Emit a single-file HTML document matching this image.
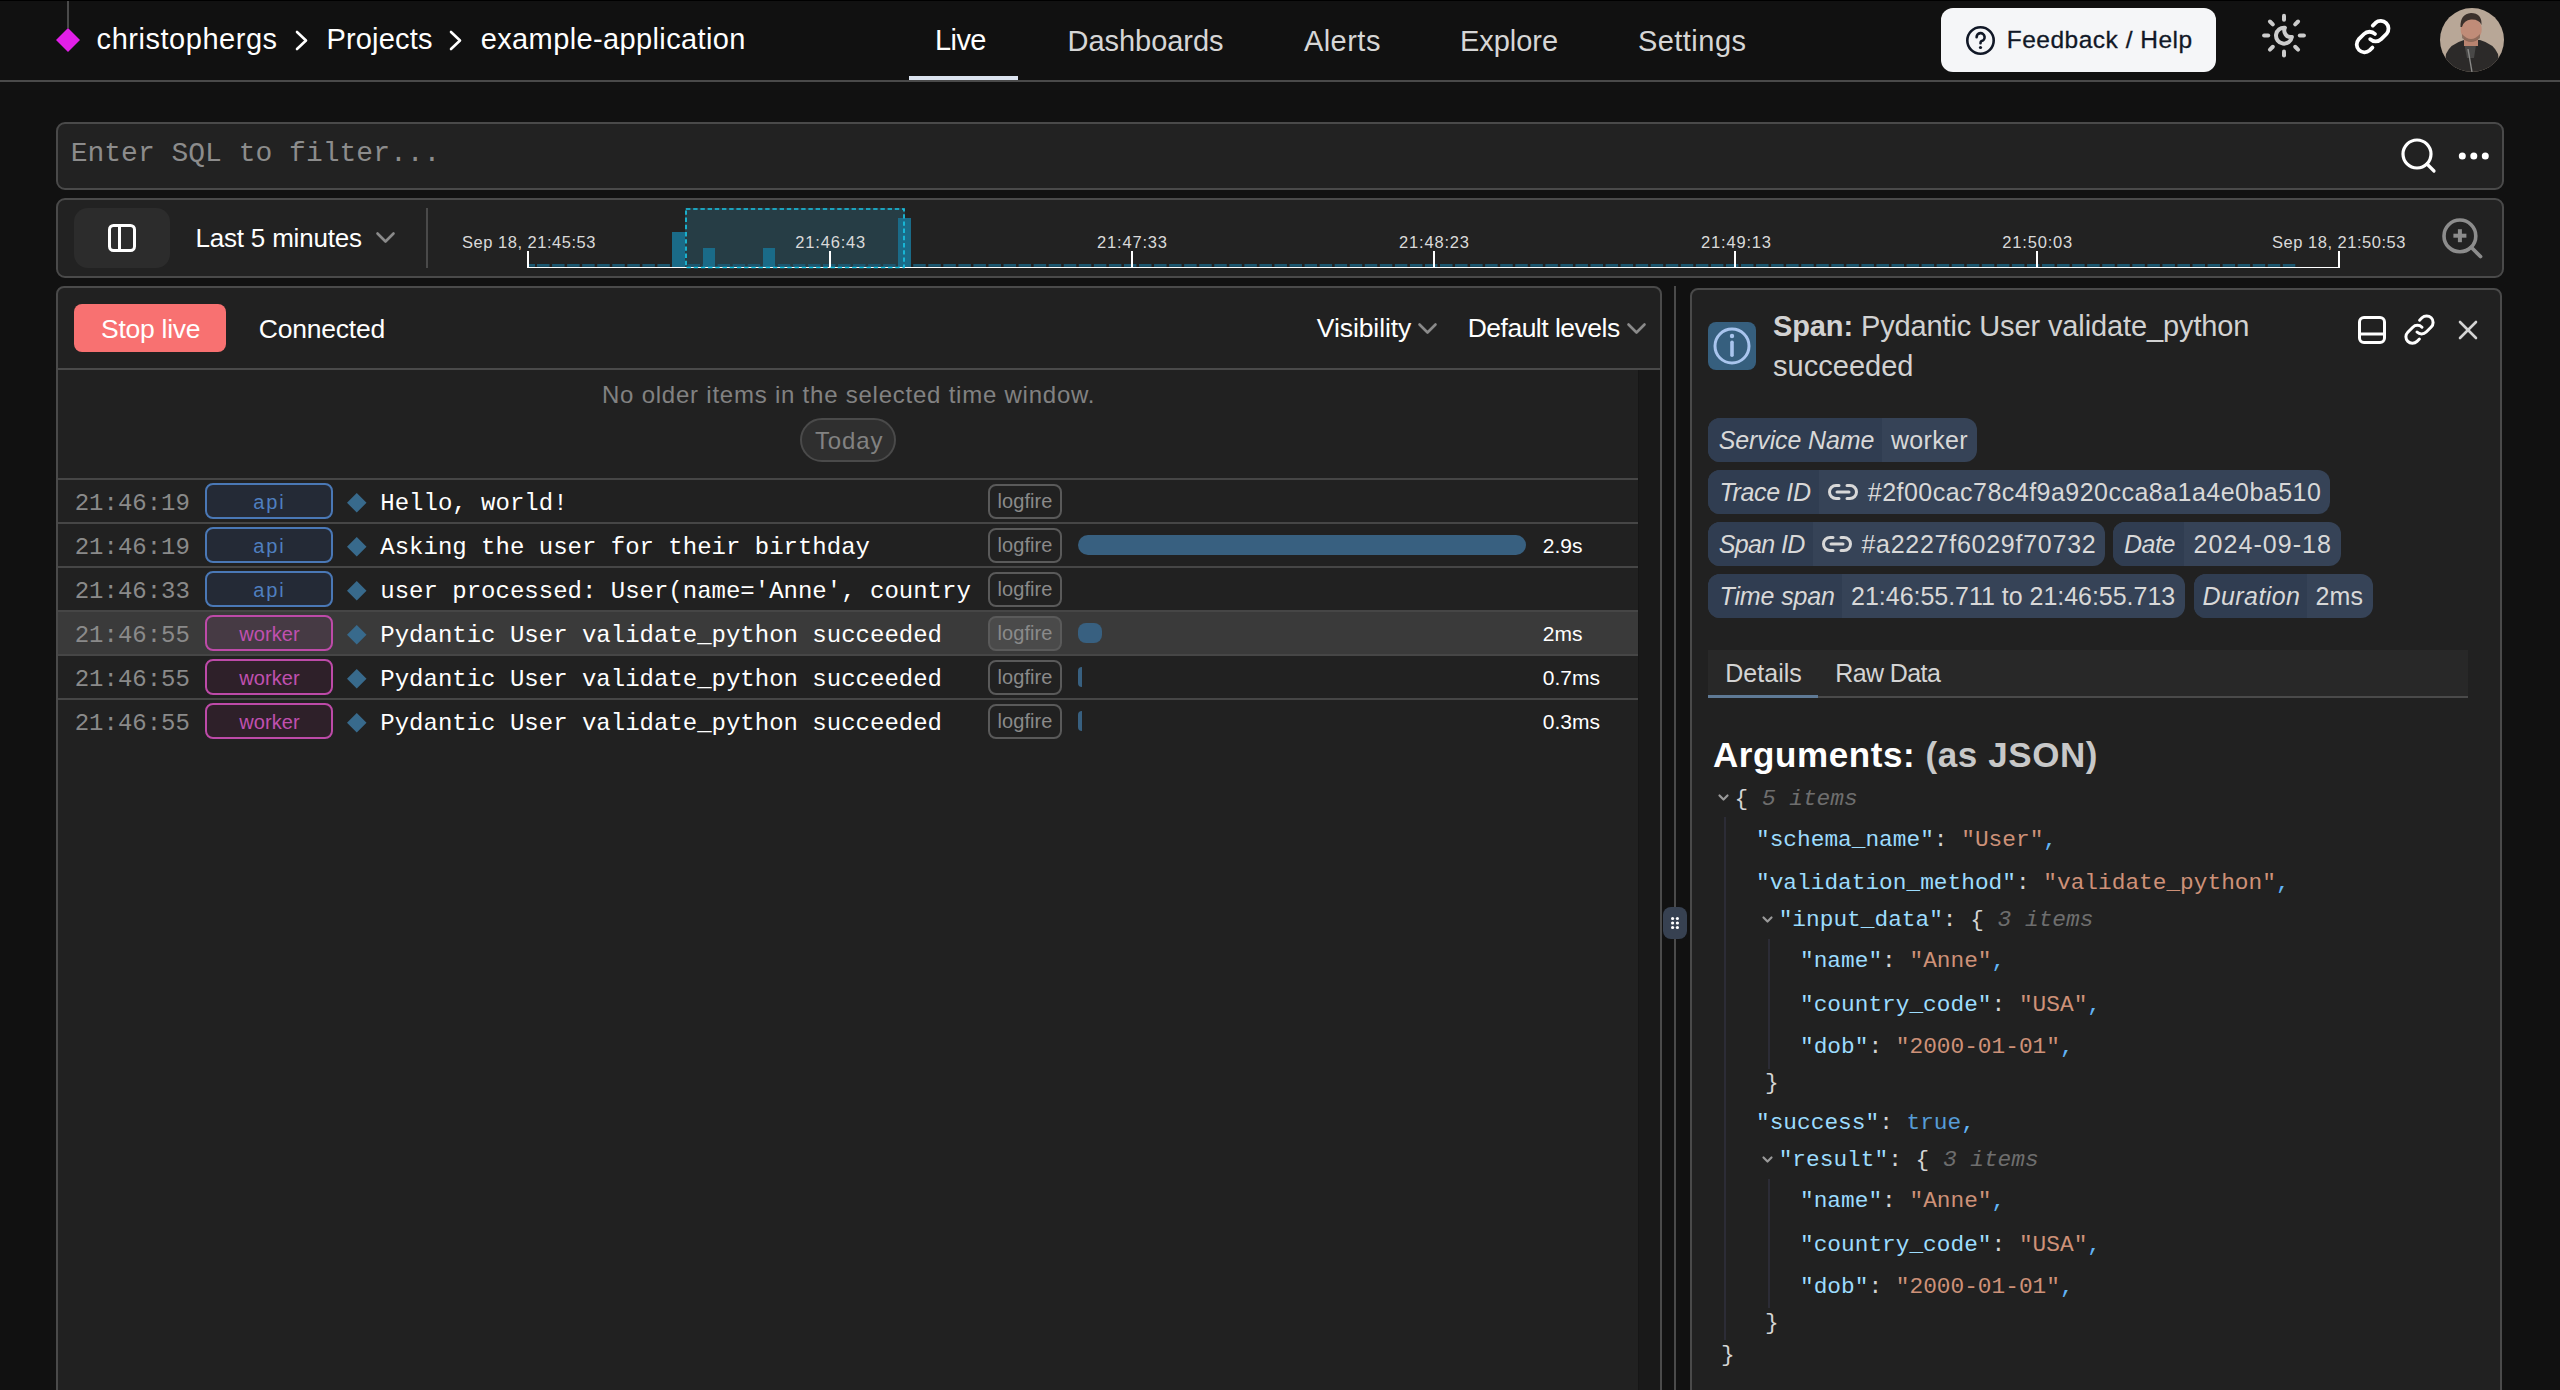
<!DOCTYPE html><html><head><meta charset="utf-8"><style>html,body{margin:0;padding:0;background:#111111;width:2560px;height:1390px;overflow:hidden;position:relative}</style></head><body><div style="position:absolute;left:0px;top:0px;width:2560px;height:1px;background:#000;border-radius:0px;"></div><div style="position:absolute;left:0px;top:80px;width:2560px;height:2px;background:#4a4a4a;border-radius:0px;"></div><div style="position:absolute;left:67px;top:1px;width:2px;height:27px;background:#4a4a4a;border-radius:0px;"></div><svg style="position:absolute;left:56px;top:28px;overflow:visible" width="24" height="24" viewBox="0 0 24 24"><polygon points="12,0 24,12 12,24 0,12" fill="#e21fe8"/></svg><svg style="position:absolute;left:296px;top:30.5px;overflow:visible" width="12" height="19" viewBox="0 0 12 19"><polyline points="1,1 10,9.5 1,18" fill="none" stroke="#fff" stroke-width="2.6" stroke-linecap="round" stroke-linejoin="round"/></svg><svg style="position:absolute;left:450px;top:30.5px;overflow:visible" width="12" height="19" viewBox="0 0 12 19"><polyline points="1,1 10,9.5 1,18" fill="none" stroke="#fff" stroke-width="2.6" stroke-linecap="round" stroke-linejoin="round"/></svg><div style="position:absolute;left:909px;top:76px;width:109px;height:4px;background:#dbe3ef;border-radius:0px;"></div><div style="position:absolute;left:1941px;top:8px;width:275px;height:64px;background:#f5f6f8;border-radius:12px;"></div><svg style="position:absolute;left:1966px;top:25.5px;overflow:visible" width="29" height="29" viewBox="0 0 29 29"><circle cx="14.5" cy="14.5" r="13.2" fill="none" stroke="#111827" stroke-width="2.6"/><path d="M10.6 11.2 A4 4 0 1 1 15.6 15 C14.7 15.4 14.5 16 14.5 17.2" fill="none" stroke="#111827" stroke-width="2.6" stroke-linecap="round"/><circle cx="14.5" cy="21.5" r="1.6" fill="#111827"/></svg><svg style="position:absolute;left:2262px;top:14px;overflow:visible" width="44" height="44" viewBox="0 0 44 44"><line x1="37.80" y1="21.60" x2="41.90" y2="21.60" stroke="#cccccc" stroke-width="4" stroke-linecap="round"/><line x1="33.17" y1="32.77" x2="36.07" y2="35.67" stroke="#cccccc" stroke-width="4" stroke-linecap="round"/><line x1="22.00" y1="37.40" x2="22.00" y2="41.50" stroke="#cccccc" stroke-width="4" stroke-linecap="round"/><line x1="10.83" y1="32.77" x2="7.93" y2="35.67" stroke="#cccccc" stroke-width="4" stroke-linecap="round"/><line x1="6.20" y1="21.60" x2="2.10" y2="21.60" stroke="#cccccc" stroke-width="4" stroke-linecap="round"/><line x1="10.83" y1="10.43" x2="7.93" y2="7.53" stroke="#cccccc" stroke-width="4" stroke-linecap="round"/><line x1="22.00" y1="5.80" x2="22.00" y2="1.70" stroke="#cccccc" stroke-width="4" stroke-linecap="round"/><line x1="33.17" y1="10.43" x2="36.07" y2="7.53" stroke="#cccccc" stroke-width="4" stroke-linecap="round"/><path d="M22.9 13.7 A8 8 0 1 0 29.9 23 A6.6 6.6 0 0 1 22.9 13.7 Z" fill="none" stroke="#cccccc" stroke-width="4" stroke-linejoin="round"/></svg><svg style="position:absolute;left:2354px;top:18px;overflow:visible" width="37" height="37" viewBox="0 0 37 37"><g fill="none" stroke="#fff" stroke-width="3.8" stroke-linecap="round"><path d="M16.2 21.2 A7.8 7.8 0 0 0 27.2 21.2 L32.6 15.8 A7.8 7.8 0 0 0 21.6 4.8 L18.8 7.6"/><path d="M21 16 A7.8 7.8 0 0 0 10 16 L4.6 21.4 A7.8 7.8 0 0 0 15.6 32.4 L18.4 29.6"/></g></svg><svg style="position:absolute;left:2440px;top:8px;overflow:visible" width="64" height="64" viewBox="0 0 64 64"><defs><clipPath id="avc"><circle cx="32" cy="32" r="32"/></clipPath></defs><g clip-path="url(#avc)"><rect width="64" height="64" fill="#b8a797"/><path d="M4 64 L6 46 Q10 36 24 32 L40 32 Q54 36 58 46 L60 64 Z" fill="#2c2a29"/><path d="M24.5 37 L36 37 L34 50 L27 50 Z" fill="#494847"/><rect x="24" y="28" width="14" height="10" fill="#b98470"/><ellipse cx="31.2" cy="21.5" rx="10.5" ry="11.5" fill="#c08c78"/><path d="M20.5 19 Q20 6 31 5 Q42 5 41.5 17 Q39 11 31 11.5 Q24 12 22 19 Z" fill="#3b302b"/><path d="M22 26 Q31 36 40 26 L40 30 Q31 38 22 30 Z" fill="#6e5548" opacity="0.6"/><line x1="28" y1="41" x2="32" y2="64" stroke="#8a8a88" stroke-width="1.4"/></g></svg><div style="position:absolute;left:56px;top:122px;width:2448px;height:68px;background:#222222;border-radius:9px;border:2px solid #4a4a4a;box-sizing:border-box;"></div><svg style="position:absolute;left:2400px;top:138px;overflow:visible" width="38" height="38" viewBox="0 0 38 38"><circle cx="17" cy="16" r="14" fill="none" stroke="#fff" stroke-width="3.2"/><line x1="27" y1="26" x2="34" y2="33" stroke="#fff" stroke-width="3.2" stroke-linecap="round"/></svg><svg style="position:absolute;left:2456px;top:150px;overflow:visible" width="36" height="12" viewBox="0 0 36 12"><circle cx="6.3" cy="6" r="3.5" fill="#fff"/><circle cx="17.8" cy="6" r="3.5" fill="#fff"/><circle cx="29.3" cy="6" r="3.5" fill="#fff"/></svg><div style="position:absolute;left:56px;top:198px;width:2448px;height:80px;background:#222222;border-radius:9px;border:2px solid #4a4a4a;box-sizing:border-box;"></div><div style="position:absolute;left:74px;top:208px;width:96px;height:60px;background:#2c2c2c;border-radius:14px;"></div><svg style="position:absolute;left:108px;top:224px;overflow:visible" width="28" height="28" viewBox="0 0 28 28"><rect x="1.5" y="1.5" width="25" height="25" rx="4" fill="none" stroke="#fff" stroke-width="3"/><line x1="11.5" y1="1.5" x2="11.5" y2="26.5" stroke="#fff" stroke-width="3"/></svg><svg style="position:absolute;left:376px;top:232px;overflow:visible" width="19" height="12" viewBox="0 0 19 12"><polyline points="1.5,1.5 9.5,9.5 17.5,1.5" fill="none" stroke="#8a8a8a" stroke-width="2.6" stroke-linecap="round" stroke-linejoin="round"/></svg><div style="position:absolute;left:426px;top:208px;width:2px;height:60px;background:#4a4a4a;border-radius:0px;"></div><div style="position:absolute;left:685px;top:208px;width:220px;height:60px;background:rgba(46,100,120,0.42);border-radius:0px;"></div><svg style="position:absolute;left:527px;top:264px;overflow:visible" width="1780" height="3" viewBox="0 0 1780 3"><rect x="2" y="0" width="6" height="2.8" fill="#1b5770"/><rect x="10.00" y="0" width="12.5" height="2.8" fill="#1b5770"/><rect x="25.05" y="0" width="12.5" height="2.8" fill="#1b5770"/><rect x="40.10" y="0" width="12.5" height="2.8" fill="#1b5770"/><rect x="55.15" y="0" width="12.5" height="2.8" fill="#1b5770"/><rect x="70.20" y="0" width="12.5" height="2.8" fill="#1b5770"/><rect x="85.25" y="0" width="12.5" height="2.8" fill="#1b5770"/><rect x="100.30" y="0" width="12.5" height="2.8" fill="#1b5770"/><rect x="115.35" y="0" width="12.5" height="2.8" fill="#1b5770"/><rect x="130.40" y="0" width="12.5" height="2.8" fill="#1b5770"/><rect x="145.45" y="0" width="12.5" height="2.8" fill="#1b5770"/><rect x="160.50" y="0" width="12.5" height="2.8" fill="#1b5770"/><rect x="175.55" y="0" width="12.5" height="2.8" fill="#1b5770"/><rect x="190.60" y="0" width="12.5" height="2.8" fill="#1b5770"/><rect x="205.65" y="0" width="12.5" height="2.8" fill="#1b5770"/><rect x="220.70" y="0" width="12.5" height="2.8" fill="#1b5770"/><rect x="235.75" y="0" width="12.5" height="2.8" fill="#1b5770"/><rect x="250.80" y="0" width="12.5" height="2.8" fill="#1b5770"/><rect x="265.85" y="0" width="12.5" height="2.8" fill="#1b5770"/><rect x="280.90" y="0" width="12.5" height="2.8" fill="#1b5770"/><rect x="295.95" y="0" width="12.5" height="2.8" fill="#1b5770"/><rect x="311.00" y="0" width="12.5" height="2.8" fill="#1b5770"/><rect x="326.05" y="0" width="12.5" height="2.8" fill="#1b5770"/><rect x="341.10" y="0" width="12.5" height="2.8" fill="#1b5770"/><rect x="356.15" y="0" width="12.5" height="2.8" fill="#1b5770"/><rect x="371.20" y="0" width="12.5" height="2.8" fill="#1b5770"/><rect x="386.25" y="0" width="12.5" height="2.8" fill="#1b5770"/><rect x="401.30" y="0" width="12.5" height="2.8" fill="#1b5770"/><rect x="416.35" y="0" width="12.5" height="2.8" fill="#1b5770"/><rect x="431.40" y="0" width="12.5" height="2.8" fill="#1b5770"/><rect x="446.45" y="0" width="12.5" height="2.8" fill="#1b5770"/><rect x="461.50" y="0" width="12.5" height="2.8" fill="#1b5770"/><rect x="476.55" y="0" width="12.5" height="2.8" fill="#1b5770"/><rect x="491.60" y="0" width="12.5" height="2.8" fill="#1b5770"/><rect x="506.65" y="0" width="12.5" height="2.8" fill="#1b5770"/><rect x="521.70" y="0" width="12.5" height="2.8" fill="#1b5770"/><rect x="536.75" y="0" width="12.5" height="2.8" fill="#1b5770"/><rect x="551.80" y="0" width="12.5" height="2.8" fill="#1b5770"/><rect x="566.85" y="0" width="12.5" height="2.8" fill="#1b5770"/><rect x="581.90" y="0" width="12.5" height="2.8" fill="#1b5770"/><rect x="596.95" y="0" width="12.5" height="2.8" fill="#1b5770"/><rect x="612.00" y="0" width="12.5" height="2.8" fill="#1b5770"/><rect x="627.05" y="0" width="12.5" height="2.8" fill="#1b5770"/><rect x="642.10" y="0" width="12.5" height="2.8" fill="#1b5770"/><rect x="657.15" y="0" width="12.5" height="2.8" fill="#1b5770"/><rect x="672.20" y="0" width="12.5" height="2.8" fill="#1b5770"/><rect x="687.25" y="0" width="12.5" height="2.8" fill="#1b5770"/><rect x="702.30" y="0" width="12.5" height="2.8" fill="#1b5770"/><rect x="717.35" y="0" width="12.5" height="2.8" fill="#1b5770"/><rect x="732.40" y="0" width="12.5" height="2.8" fill="#1b5770"/><rect x="747.45" y="0" width="12.5" height="2.8" fill="#1b5770"/><rect x="762.50" y="0" width="12.5" height="2.8" fill="#1b5770"/><rect x="777.55" y="0" width="12.5" height="2.8" fill="#1b5770"/><rect x="792.60" y="0" width="12.5" height="2.8" fill="#1b5770"/><rect x="807.65" y="0" width="12.5" height="2.8" fill="#1b5770"/><rect x="822.70" y="0" width="12.5" height="2.8" fill="#1b5770"/><rect x="837.75" y="0" width="12.5" height="2.8" fill="#1b5770"/><rect x="852.80" y="0" width="12.5" height="2.8" fill="#1b5770"/><rect x="867.85" y="0" width="12.5" height="2.8" fill="#1b5770"/><rect x="882.90" y="0" width="12.5" height="2.8" fill="#1b5770"/><rect x="897.95" y="0" width="12.5" height="2.8" fill="#1b5770"/><rect x="913.00" y="0" width="12.5" height="2.8" fill="#1b5770"/><rect x="928.05" y="0" width="12.5" height="2.8" fill="#1b5770"/><rect x="943.10" y="0" width="12.5" height="2.8" fill="#1b5770"/><rect x="958.15" y="0" width="12.5" height="2.8" fill="#1b5770"/><rect x="973.20" y="0" width="12.5" height="2.8" fill="#1b5770"/><rect x="988.25" y="0" width="12.5" height="2.8" fill="#1b5770"/><rect x="1003.30" y="0" width="12.5" height="2.8" fill="#1b5770"/><rect x="1018.35" y="0" width="12.5" height="2.8" fill="#1b5770"/><rect x="1033.40" y="0" width="12.5" height="2.8" fill="#1b5770"/><rect x="1048.45" y="0" width="12.5" height="2.8" fill="#1b5770"/><rect x="1063.50" y="0" width="12.5" height="2.8" fill="#1b5770"/><rect x="1078.55" y="0" width="12.5" height="2.8" fill="#1b5770"/><rect x="1093.60" y="0" width="12.5" height="2.8" fill="#1b5770"/><rect x="1108.65" y="0" width="12.5" height="2.8" fill="#1b5770"/><rect x="1123.70" y="0" width="12.5" height="2.8" fill="#1b5770"/><rect x="1138.75" y="0" width="12.5" height="2.8" fill="#1b5770"/><rect x="1153.80" y="0" width="12.5" height="2.8" fill="#1b5770"/><rect x="1168.85" y="0" width="12.5" height="2.8" fill="#1b5770"/><rect x="1183.90" y="0" width="12.5" height="2.8" fill="#1b5770"/><rect x="1198.95" y="0" width="12.5" height="2.8" fill="#1b5770"/><rect x="1214.00" y="0" width="12.5" height="2.8" fill="#1b5770"/><rect x="1229.05" y="0" width="12.5" height="2.8" fill="#1b5770"/><rect x="1244.10" y="0" width="12.5" height="2.8" fill="#1b5770"/><rect x="1259.15" y="0" width="12.5" height="2.8" fill="#1b5770"/><rect x="1274.20" y="0" width="12.5" height="2.8" fill="#1b5770"/><rect x="1289.25" y="0" width="12.5" height="2.8" fill="#1b5770"/><rect x="1304.30" y="0" width="12.5" height="2.8" fill="#1b5770"/><rect x="1319.35" y="0" width="12.5" height="2.8" fill="#1b5770"/><rect x="1334.40" y="0" width="12.5" height="2.8" fill="#1b5770"/><rect x="1349.45" y="0" width="12.5" height="2.8" fill="#1b5770"/><rect x="1364.50" y="0" width="12.5" height="2.8" fill="#1b5770"/><rect x="1379.55" y="0" width="12.5" height="2.8" fill="#1b5770"/><rect x="1394.60" y="0" width="12.5" height="2.8" fill="#1b5770"/><rect x="1409.65" y="0" width="12.5" height="2.8" fill="#1b5770"/><rect x="1424.70" y="0" width="12.5" height="2.8" fill="#1b5770"/><rect x="1439.75" y="0" width="12.5" height="2.8" fill="#1b5770"/><rect x="1454.80" y="0" width="12.5" height="2.8" fill="#1b5770"/><rect x="1469.85" y="0" width="12.5" height="2.8" fill="#1b5770"/><rect x="1484.90" y="0" width="12.5" height="2.8" fill="#1b5770"/><rect x="1499.95" y="0" width="12.5" height="2.8" fill="#1b5770"/><rect x="1515.00" y="0" width="12.5" height="2.8" fill="#1b5770"/><rect x="1530.05" y="0" width="12.5" height="2.8" fill="#1b5770"/><rect x="1545.10" y="0" width="12.5" height="2.8" fill="#1b5770"/><rect x="1560.15" y="0" width="12.5" height="2.8" fill="#1b5770"/><rect x="1575.20" y="0" width="12.5" height="2.8" fill="#1b5770"/><rect x="1590.25" y="0" width="12.5" height="2.8" fill="#1b5770"/><rect x="1605.30" y="0" width="12.5" height="2.8" fill="#1b5770"/><rect x="1620.35" y="0" width="12.5" height="2.8" fill="#1b5770"/><rect x="1635.40" y="0" width="12.5" height="2.8" fill="#1b5770"/><rect x="1650.45" y="0" width="12.5" height="2.8" fill="#1b5770"/><rect x="1665.50" y="0" width="12.5" height="2.8" fill="#1b5770"/><rect x="1680.55" y="0" width="12.5" height="2.8" fill="#1b5770"/><rect x="1695.60" y="0" width="12.5" height="2.8" fill="#1b5770"/><rect x="1710.65" y="0" width="12.5" height="2.8" fill="#1b5770"/><rect x="1725.70" y="0" width="12.5" height="2.8" fill="#1b5770"/><rect x="1740.75" y="0" width="12.5" height="2.8" fill="#1b5770"/><rect x="1755.80" y="0" width="12.5" height="2.8" fill="#1b5770"/></svg><div style="position:absolute;left:672.45px;top:232px;width:12.5px;height:35px;background:#1a6b88;border-radius:0px;"></div><div style="position:absolute;left:702.55px;top:248px;width:12.5px;height:19px;background:#1a6b88;border-radius:0px;"></div><div style="position:absolute;left:762.75px;top:248px;width:12.5px;height:19px;background:#1a6b88;border-radius:0px;"></div><div style="position:absolute;left:898.2px;top:218px;width:12.5px;height:49px;background:#1a6b88;border-radius:0px;"></div><div style="position:absolute;left:527px;top:266.5px;width:1812.5px;height:1.5px;background:#ffffff;border-radius:0px;"></div><div style="position:absolute;left:526.5px;top:251px;width:2.0px;height:17px;background:#ffffff;border-radius:0px;"></div><div style="position:absolute;left:829px;top:251px;width:2px;height:17px;background:#ffffff;border-radius:0px;"></div><div style="position:absolute;left:1130.5px;top:251px;width:2.0px;height:17px;background:#ffffff;border-radius:0px;"></div><div style="position:absolute;left:1432.5px;top:251px;width:2.0px;height:17px;background:#ffffff;border-radius:0px;"></div><div style="position:absolute;left:1734px;top:251px;width:2px;height:17px;background:#ffffff;border-radius:0px;"></div><div style="position:absolute;left:2035.5px;top:251px;width:2.0px;height:17px;background:#ffffff;border-radius:0px;"></div><div style="position:absolute;left:2337.5px;top:251px;width:2.0px;height:17px;background:#ffffff;border-radius:0px;"></div><svg style="position:absolute;left:685px;top:208px;overflow:visible" width="220" height="60" viewBox="0 0 220 60"><rect x="1" y="1" width="218" height="58.5" fill="none" stroke="#19c3e3" stroke-width="1.7" stroke-dasharray="4.4 2.8"/></svg><svg style="position:absolute;left:2441px;top:216px;overflow:visible" width="44" height="44" viewBox="0 0 44 44"><circle cx="18.9" cy="19.9" r="15.9" fill="none" stroke="#8c8c8c" stroke-width="3.6"/><line x1="30.5" y1="31.5" x2="39.5" y2="40.5" stroke="#8c8c8c" stroke-width="3.8" stroke-linecap="round"/><line x1="18.9" y1="13.2" x2="18.9" y2="26.2" stroke="#8c8c8c" stroke-width="4" stroke-linecap="butt"/><line x1="12.4" y1="19.7" x2="25.4" y2="19.7" stroke="#8c8c8c" stroke-width="4" stroke-linecap="butt"/></svg><div style="position:absolute;left:56px;top:286px;width:1606px;height:1134px;background:#212121;border-radius:8px;border:2px solid #4a4a4a;box-sizing:border-box;"></div><div style="position:absolute;left:58px;top:368px;width:1602px;height:2px;background:#4a4a4a;border-radius:0px;"></div><div style="position:absolute;left:74px;top:304px;width:152px;height:48px;background:#f87171;border-radius:8px;"></div><svg style="position:absolute;left:1418px;top:323px;overflow:visible" width="19" height="12" viewBox="0 0 19 12"><polyline points="1.5,1.5 9.5,9.5 17.5,1.5" fill="none" stroke="#8a8a8a" stroke-width="2.6" stroke-linecap="round" stroke-linejoin="round"/></svg><svg style="position:absolute;left:1626.5px;top:323px;overflow:visible" width="19" height="12" viewBox="0 0 19 12"><polyline points="1.5,1.5 9.5,9.5 17.5,1.5" fill="none" stroke="#8a8a8a" stroke-width="2.6" stroke-linecap="round" stroke-linejoin="round"/></svg><div style="position:absolute;left:1638px;top:370px;width:22px;height:1020px;background:#191919;border-radius:0px;"></div><div style="position:absolute;left:1638px;top:370px;width:1px;height:1020px;background:#161616;border-radius:0px;"></div><div style="position:absolute;left:800px;top:418px;width:96px;height:44px;background:#2f2f2f;border-radius:22px;border:2px solid #4a4a4a;box-sizing:border-box;"></div><div style="position:absolute;left:58px;top:478px;width:1580px;height:2px;background:#464646;border-radius:0px;"></div><div style="position:absolute;left:205px;top:483px;width:128px;height:36px;background:#242a36;border-radius:8px;border:2px solid #4a78b6;box-sizing:border-box;"></div><svg style="position:absolute;left:346.5px;top:492.5px;overflow:visible" width="19.5" height="19.5" viewBox="0 0 19.5 19.5"><polygon points="9.75,0 19.5,9.75 9.75,19.5 0,9.75" fill="#386a8c"/></svg><div style="position:absolute;left:988px;top:484px;width:74px;height:35px;background:transparent;border-radius:8px;border:2px solid #5a5a5a;box-sizing:border-box;"></div><div style="position:absolute;left:58px;top:522px;width:1580px;height:2px;background:#464646;border-radius:0px;"></div><div style="position:absolute;left:205px;top:527px;width:128px;height:36px;background:#242a36;border-radius:8px;border:2px solid #4a78b6;box-sizing:border-box;"></div><svg style="position:absolute;left:346.5px;top:536.5px;overflow:visible" width="19.5" height="19.5" viewBox="0 0 19.5 19.5"><polygon points="9.75,0 19.5,9.75 9.75,19.5 0,9.75" fill="#386a8c"/></svg><div style="position:absolute;left:988px;top:528px;width:74px;height:35px;background:transparent;border-radius:8px;border:2px solid #5a5a5a;box-sizing:border-box;"></div><div style="position:absolute;left:1078px;top:535px;width:448px;height:20px;background:#386080;border-radius:10px;"></div><div style="position:absolute;left:58px;top:566px;width:1580px;height:2px;background:#464646;border-radius:0px;"></div><div style="position:absolute;left:205px;top:571px;width:128px;height:36px;background:#242a36;border-radius:8px;border:2px solid #4a78b6;box-sizing:border-box;"></div><svg style="position:absolute;left:346.5px;top:580.5px;overflow:visible" width="19.5" height="19.5" viewBox="0 0 19.5 19.5"><polygon points="9.75,0 19.5,9.75 9.75,19.5 0,9.75" fill="#386a8c"/></svg><div style="position:absolute;left:988px;top:572px;width:74px;height:35px;background:transparent;border-radius:8px;border:2px solid #5a5a5a;box-sizing:border-box;"></div><div style="position:absolute;left:58px;top:610px;width:1580px;height:2px;background:#464646;border-radius:0px;"></div><div style="position:absolute;left:58px;top:612px;width:1580px;height:42px;background:#3a3a3a;border-radius:0px;"></div><div style="position:absolute;left:205px;top:615px;width:128px;height:36px;background:#463a44;border-radius:8px;border:2px solid #bd4aa8;box-sizing:border-box;"></div><svg style="position:absolute;left:346.5px;top:624.5px;overflow:visible" width="19.5" height="19.5" viewBox="0 0 19.5 19.5"><polygon points="9.75,0 19.5,9.75 9.75,19.5 0,9.75" fill="#386a8c"/></svg><div style="position:absolute;left:988px;top:616px;width:74px;height:35px;background:#4a4a4a;border-radius:8px;border:2px solid #5a5a5a;box-sizing:border-box;"></div><div style="position:absolute;left:1078px;top:623px;width:24px;height:20px;background:#386080;border-radius:8px;"></div><div style="position:absolute;left:58px;top:654px;width:1580px;height:2px;background:#464646;border-radius:0px;"></div><div style="position:absolute;left:205px;top:659px;width:128px;height:36px;background:#2e2029;border-radius:8px;border:2px solid #bd4aa8;box-sizing:border-box;"></div><svg style="position:absolute;left:346.5px;top:668.5px;overflow:visible" width="19.5" height="19.5" viewBox="0 0 19.5 19.5"><polygon points="9.75,0 19.5,9.75 9.75,19.5 0,9.75" fill="#386a8c"/></svg><div style="position:absolute;left:988px;top:660px;width:74px;height:35px;background:transparent;border-radius:8px;border:2px solid #5a5a5a;box-sizing:border-box;"></div><div style="position:absolute;left:1078px;top:667px;width:4px;height:20px;background:#386080;border-radius:0px;border-radius:10px 0 0 10px;"></div><div style="position:absolute;left:58px;top:698px;width:1580px;height:2px;background:#464646;border-radius:0px;"></div><div style="position:absolute;left:205px;top:703px;width:128px;height:36px;background:#2e2029;border-radius:8px;border:2px solid #bd4aa8;box-sizing:border-box;"></div><svg style="position:absolute;left:346.5px;top:712.5px;overflow:visible" width="19.5" height="19.5" viewBox="0 0 19.5 19.5"><polygon points="9.75,0 19.5,9.75 9.75,19.5 0,9.75" fill="#386a8c"/></svg><div style="position:absolute;left:988px;top:704px;width:74px;height:35px;background:transparent;border-radius:8px;border:2px solid #5a5a5a;box-sizing:border-box;"></div><div style="position:absolute;left:1078px;top:711px;width:4px;height:20px;background:#386080;border-radius:0px;border-radius:10px 0 0 10px;"></div><div style="position:absolute;left:58px;top:700px;width:1580px;height:0px;background:#464646;border-radius:0px;"></div><div style="position:absolute;left:1674px;top:286px;width:2px;height:1104px;background:#4a4a4a;border-radius:0px;"></div><div style="position:absolute;left:1663px;top:907px;width:24px;height:32px;background:#374151;border-radius:8px;"></div><svg style="position:absolute;left:1663px;top:907px;overflow:visible" width="24" height="32" viewBox="0 0 24 32"><circle cx="9.6" cy="11.5" r="1.6" fill="#fff"/><circle cx="9.6" cy="16" r="1.6" fill="#fff"/><circle cx="9.6" cy="20.5" r="1.6" fill="#fff"/><circle cx="14.4" cy="11.5" r="1.6" fill="#fff"/><circle cx="14.4" cy="16" r="1.6" fill="#fff"/><circle cx="14.4" cy="20.5" r="1.6" fill="#fff"/></svg><div style="position:absolute;left:1690px;top:288px;width:812px;height:1132px;background:#212121;border-radius:8px;border:2px solid #4a4a4a;box-sizing:border-box;"></div><div style="position:absolute;left:1708px;top:322px;width:48px;height:48px;background:#365f7e;border-radius:8px;"></div><svg style="position:absolute;left:1708px;top:322px;overflow:visible" width="48" height="48" viewBox="0 0 48 48"><circle cx="24" cy="24" r="17" fill="none" stroke="#a9c5ee" stroke-width="3"/><circle cx="24" cy="14" r="2.2" fill="#a9c5ee"/><line x1="24" y1="20.2" x2="24" y2="33.2" stroke="#a9c5ee" stroke-width="3.6" stroke-linecap="round"/></svg><svg style="position:absolute;left:2358px;top:316px;overflow:visible" width="28" height="28" viewBox="0 0 28 28"><rect x="1.5" y="1.5" width="25" height="25" rx="4.5" fill="none" stroke="#fff" stroke-width="3"/><line x1="1.5" y1="18" x2="26.5" y2="18" stroke="#fff" stroke-width="3"/></svg><svg style="position:absolute;left:2404px;top:314px;overflow:visible" width="32" height="32" viewBox="0 0 32 32"><g fill="none" stroke="#fff" stroke-width="3" stroke-linecap="round"><path d="M13 18 A6.5 6.5 0 0 0 22.2 18 L27.2 13 A6.5 6.5 0 0 0 18 3.8 L15.6 6.2"/><path d="M18 13.2 A6.5 6.5 0 0 0 8.8 13.2 L3.8 18.2 A6.5 6.5 0 0 0 13 27.4 L15.4 25"/></g></svg><svg style="position:absolute;left:2458px;top:320px;overflow:visible" width="20" height="20" viewBox="0 0 20 20"><line x1="2" y1="2" x2="18" y2="18" stroke="#d4d4d4" stroke-width="2.6" stroke-linecap="round"/><line x1="18" y1="2" x2="2" y2="18" stroke="#d4d4d4" stroke-width="2.6" stroke-linecap="round"/></svg><div style="position:absolute;left:1708px;top:418px;width:269px;height:44px;border-radius:12px;overflow:hidden;background:#364357"><div style="position:absolute;left:0;top:0;width:173.5999999999999px;height:44px;background:#303d51"></div></div><div style="position:absolute;left:1708px;top:470px;width:621.5999999999999px;height:44px;border-radius:12px;overflow:hidden;background:#364357"><div style="position:absolute;left:0;top:0;width:110.79999999999995px;height:44px;background:#303d51"></div></div><svg style="position:absolute;left:1828.4px;top:483px;overflow:visible" width="30" height="18" viewBox="0 0 30 18"><g fill="none" stroke="#d8d8d8" stroke-width="3" stroke-linecap="round"><path d="M11 2.5 H8 A6.5 6.5 0 0 0 8 15.5 H11"/><path d="M19 2.5 H22 A6.5 6.5 0 0 1 22 15.5 H19"/><line x1="9" y1="9" x2="21" y2="9"/></g></svg><div style="position:absolute;left:1708px;top:522px;width:396.8000000000002px;height:44px;border-radius:12px;overflow:hidden;background:#364357"><div style="position:absolute;left:0;top:0;width:104.70000000000005px;height:44px;background:#303d51"></div></div><svg style="position:absolute;left:1822.3px;top:535px;overflow:visible" width="30" height="18" viewBox="0 0 30 18"><g fill="none" stroke="#d8d8d8" stroke-width="3" stroke-linecap="round"><path d="M11 2.5 H8 A6.5 6.5 0 0 0 8 15.5 H11"/><path d="M19 2.5 H22 A6.5 6.5 0 0 1 22 15.5 H19"/><line x1="9" y1="9" x2="21" y2="9"/></g></svg><div style="position:absolute;left:2113.4px;top:522px;width:227.5px;height:44px;border-radius:12px;overflow:hidden;background:#364357"><div style="position:absolute;left:0;top:0;width:70.59999999999991px;height:44px;background:#303d51"></div></div><div style="position:absolute;left:1708px;top:574px;width:476.9000000000001px;height:44px;border-radius:12px;overflow:hidden;background:#364357"><div style="position:absolute;left:0;top:0;width:134.0999999999999px;height:44px;background:#303d51"></div></div><div style="position:absolute;left:2193.5px;top:574px;width:179.4000000000001px;height:44px;border-radius:12px;overflow:hidden;background:#364357"><div style="position:absolute;left:0;top:0;width:113.09999999999991px;height:44px;background:#303d51"></div></div><div style="position:absolute;left:1708px;top:650px;width:760px;height:46px;background:#282828;border-radius:0px;"></div><div style="position:absolute;left:1708px;top:695px;width:110px;height:3px;background:#5f7a96;border-radius:0px;"></div><div style="position:absolute;left:1818px;top:696px;width:650px;height:2px;background:#4a4a4a;border-radius:0px;"></div><svg style="position:absolute;left:1718px;top:794px;overflow:visible" width="11" height="8" viewBox="0 0 11 8"><polyline points="1.5,1.5 5.5,5.5 9.5,1.5" fill="none" stroke="#9a9a9a" stroke-width="2.2" stroke-linecap="round" stroke-linejoin="round"/></svg><svg style="position:absolute;left:1762px;top:916px;overflow:visible" width="11" height="8" viewBox="0 0 11 8"><polyline points="1.5,1.5 5.5,5.5 9.5,1.5" fill="none" stroke="#9a9a9a" stroke-width="2.2" stroke-linecap="round" stroke-linejoin="round"/></svg><svg style="position:absolute;left:1762px;top:1156px;overflow:visible" width="11" height="8" viewBox="0 0 11 8"><polyline points="1.5,1.5 5.5,5.5 9.5,1.5" fill="none" stroke="#9a9a9a" stroke-width="2.2" stroke-linecap="round" stroke-linejoin="round"/></svg><div style="position:absolute;left:1724px;top:817px;width:2px;height:523px;background:#2c2c36;border-radius:0px;"></div><div style="position:absolute;left:1768px;top:939px;width:2px;height:130px;background:#2c2c36;border-radius:0px;"></div><div style="position:absolute;left:1768px;top:1179px;width:2px;height:129px;background:#2c2c36;border-radius:0px;"></div><div id="t0" style="position:absolute;left:96.60px;top:25.35px;font-family:'Liberation Sans', sans-serif;font-size:29px;line-height:1;color:#fff;font-weight:400;font-style:normal;white-space:pre;letter-spacing:0.534px;">christophergs</div><div id="t1" style="position:absolute;left:326.40px;top:25.35px;font-family:'Liberation Sans', sans-serif;font-size:29px;line-height:1;color:#fff;font-weight:400;font-style:normal;white-space:pre;letter-spacing:0.191px;">Projects</div><div id="t2" style="position:absolute;left:480.70px;top:25.35px;font-family:'Liberation Sans', sans-serif;font-size:29px;line-height:1;color:#fff;font-weight:400;font-style:normal;white-space:pre;letter-spacing:0.381px;">example-application</div><div id="t3" style="position:absolute;left:935.00px;top:25.65px;font-family:'Liberation Sans', sans-serif;font-size:29px;line-height:1;color:#fff;font-weight:400;font-style:normal;white-space:pre;letter-spacing:-0.568px;">Live</div><div id="t4" style="position:absolute;left:1067.60px;top:27.35px;font-family:'Liberation Sans', sans-serif;font-size:29px;line-height:1;color:#d6d6d6;font-weight:400;font-style:normal;white-space:pre;letter-spacing:-0.053px;">Dashboards</div><div id="t5" style="position:absolute;left:1303.90px;top:27.35px;font-family:'Liberation Sans', sans-serif;font-size:29px;line-height:1;color:#d6d6d6;font-weight:400;font-style:normal;white-space:pre;letter-spacing:0.472px;">Alerts</div><div id="t6" style="position:absolute;left:1460.00px;top:27.35px;font-family:'Liberation Sans', sans-serif;font-size:29px;line-height:1;color:#d6d6d6;font-weight:400;font-style:normal;white-space:pre;letter-spacing:-0.038px;">Explore</div><div id="t7" style="position:absolute;left:1637.90px;top:27.35px;font-family:'Liberation Sans', sans-serif;font-size:29px;line-height:1;color:#d6d6d6;font-weight:400;font-style:normal;white-space:pre;letter-spacing:0.472px;">Settings</div><div id="t8" style="position:absolute;left:2006.70px;top:27.97px;font-family:'Liberation Sans', sans-serif;font-size:24.5px;line-height:1;color:#111827;font-weight:400;font-style:normal;white-space:pre;letter-spacing:0.507px;-webkit-text-stroke:0.3px #111827;">Feedback / Help</div><div id="t9" style="position:absolute;left:70.70px;top:140.42px;font-family:'Liberation Mono', monospace;font-size:28px;line-height:1;color:#8c8c8c;font-weight:400;font-style:normal;white-space:pre;letter-spacing:0.000px;">Enter SQL to filter...</div><div id="t10" style="position:absolute;left:195.50px;top:224.90px;font-family:'Liberation Sans', sans-serif;font-size:26px;line-height:1;color:#fff;font-weight:400;font-style:normal;white-space:pre;letter-spacing:-0.200px;">Last 5 minutes</div><div id="t11" style="position:absolute;left:462.00px;top:234.28px;font-family:'Liberation Sans', sans-serif;font-size:16.5px;line-height:1;color:#dadada;font-weight:400;font-style:normal;white-space:pre;letter-spacing:0.520px;">Sep 18, 21:45:53</div><div id="t12" style="position:absolute;left:795.30px;top:234.28px;font-family:'Liberation Sans', sans-serif;font-size:16.5px;line-height:1;color:#dadada;font-weight:400;font-style:normal;white-space:pre;letter-spacing:0.824px;">21:46:43</div><div id="t13" style="position:absolute;left:1097.00px;top:234.28px;font-family:'Liberation Sans', sans-serif;font-size:16.5px;line-height:1;color:#dadada;font-weight:400;font-style:normal;white-space:pre;letter-spacing:0.824px;">21:47:33</div><div id="t14" style="position:absolute;left:1399.00px;top:234.28px;font-family:'Liberation Sans', sans-serif;font-size:16.5px;line-height:1;color:#dadada;font-weight:400;font-style:normal;white-space:pre;letter-spacing:0.824px;">21:48:23</div><div id="t15" style="position:absolute;left:1701.00px;top:234.28px;font-family:'Liberation Sans', sans-serif;font-size:16.5px;line-height:1;color:#dadada;font-weight:400;font-style:normal;white-space:pre;letter-spacing:0.824px;">21:49:13</div><div id="t16" style="position:absolute;left:2002.30px;top:234.28px;font-family:'Liberation Sans', sans-serif;font-size:16.5px;line-height:1;color:#dadada;font-weight:400;font-style:normal;white-space:pre;letter-spacing:0.824px;">21:50:03</div><div id="t17" style="position:absolute;left:2272.00px;top:234.28px;font-family:'Liberation Sans', sans-serif;font-size:16.5px;line-height:1;color:#dadada;font-weight:400;font-style:normal;white-space:pre;letter-spacing:0.520px;">Sep 18, 21:50:53</div><div id="t18" style="position:absolute;left:101.00px;top:315.98px;font-family:'Liberation Sans', sans-serif;font-size:26.5px;line-height:1;color:#ffffff;font-weight:400;font-style:normal;white-space:pre;letter-spacing:-0.268px;">Stop live</div><div id="t19" style="position:absolute;left:258.80px;top:315.98px;font-family:'Liberation Sans', sans-serif;font-size:26.5px;line-height:1;color:#ffffff;font-weight:400;font-style:normal;white-space:pre;letter-spacing:-0.211px;">Connected</div><div id="t20" style="position:absolute;left:1316.80px;top:315.48px;font-family:'Liberation Sans', sans-serif;font-size:26.5px;line-height:1;color:#ffffff;font-weight:400;font-style:normal;white-space:pre;letter-spacing:-0.082px;">Visibility</div><div id="t21" style="position:absolute;left:1467.70px;top:315.48px;font-family:'Liberation Sans', sans-serif;font-size:26.5px;line-height:1;color:#ffffff;font-weight:400;font-style:normal;white-space:pre;letter-spacing:-0.506px;">Default levels</div><div id="t22" style="position:absolute;left:602.00px;top:382.60px;font-family:'Liberation Sans', sans-serif;font-size:24px;line-height:1;color:#828282;font-weight:400;font-style:normal;white-space:pre;letter-spacing:0.769px;">No older items in the selected time window.</div><div id="t23" style="position:absolute;left:815.00px;top:428.60px;font-family:'Liberation Sans', sans-serif;font-size:24px;line-height:1;color:#828282;font-weight:400;font-style:normal;white-space:pre;letter-spacing:0.863px;">Today</div><div id="t24" style="position:absolute;left:74.70px;top:492.06px;font-family:'Liberation Mono', monospace;font-size:24px;line-height:1;color:#8a8a8a;font-weight:400;font-style:normal;white-space:pre;letter-spacing:0.000px;">21:46:19</div><div id="t25" style="position:absolute;left:269.50px;top:491.50px;font-family:'Liberation Sans', sans-serif;font-size:20px;line-height:1;color:#4f7fbf;font-weight:400;font-style:normal;white-space:pre;letter-spacing:1.898px;transform:translateX(-50%);">api</div><div id="t26" style="position:absolute;left:380.30px;top:492.06px;font-family:'Liberation Mono', monospace;font-size:24px;line-height:1;color:#ffffff;font-weight:400;font-style:normal;white-space:pre;letter-spacing:0.000px;">Hello, world!</div><div id="t27" style="position:absolute;left:1025.00px;top:491.00px;font-family:'Liberation Sans', sans-serif;font-size:20px;line-height:1;color:#8a8a8a;font-weight:400;font-style:normal;white-space:pre;letter-spacing:0.086px;transform:translateX(-50%);">logfire</div><div id="t28" style="position:absolute;left:74.70px;top:536.06px;font-family:'Liberation Mono', monospace;font-size:24px;line-height:1;color:#8a8a8a;font-weight:400;font-style:normal;white-space:pre;letter-spacing:0.000px;">21:46:19</div><div id="t29" style="position:absolute;left:269.50px;top:535.50px;font-family:'Liberation Sans', sans-serif;font-size:20px;line-height:1;color:#4f7fbf;font-weight:400;font-style:normal;white-space:pre;letter-spacing:1.898px;transform:translateX(-50%);">api</div><div id="t30" style="position:absolute;left:380.30px;top:536.06px;font-family:'Liberation Mono', monospace;font-size:24px;line-height:1;color:#ffffff;font-weight:400;font-style:normal;white-space:pre;letter-spacing:0.000px;">Asking the user for their birthday</div><div id="t31" style="position:absolute;left:1025.00px;top:535.00px;font-family:'Liberation Sans', sans-serif;font-size:20px;line-height:1;color:#8a8a8a;font-weight:400;font-style:normal;white-space:pre;letter-spacing:0.086px;transform:translateX(-50%);">logfire</div><div id="t32" style="position:absolute;left:1542.80px;top:534.55px;font-family:'Liberation Sans', sans-serif;font-size:21px;line-height:1;color:#ffffff;font-weight:400;font-style:normal;white-space:pre;letter-spacing:0.000px;">2.9s</div><div id="t33" style="position:absolute;left:74.70px;top:580.06px;font-family:'Liberation Mono', monospace;font-size:24px;line-height:1;color:#8a8a8a;font-weight:400;font-style:normal;white-space:pre;letter-spacing:0.000px;">21:46:33</div><div id="t34" style="position:absolute;left:269.50px;top:579.50px;font-family:'Liberation Sans', sans-serif;font-size:20px;line-height:1;color:#4f7fbf;font-weight:400;font-style:normal;white-space:pre;letter-spacing:1.898px;transform:translateX(-50%);">api</div><div id="t35" style="position:absolute;left:380.30px;top:580.06px;font-family:'Liberation Mono', monospace;font-size:24px;line-height:1;color:#ffffff;font-weight:400;font-style:normal;white-space:pre;letter-spacing:0.000px;">user processed: User(name=&#x27;Anne&#x27;, country</div><div id="t36" style="position:absolute;left:1025.00px;top:579.00px;font-family:'Liberation Sans', sans-serif;font-size:20px;line-height:1;color:#8a8a8a;font-weight:400;font-style:normal;white-space:pre;letter-spacing:0.086px;transform:translateX(-50%);">logfire</div><div id="t37" style="position:absolute;left:74.70px;top:624.06px;font-family:'Liberation Mono', monospace;font-size:24px;line-height:1;color:#8a8a8a;font-weight:400;font-style:normal;white-space:pre;letter-spacing:0.000px;">21:46:55</div><div id="t38" style="position:absolute;left:269.50px;top:623.50px;font-family:'Liberation Sans', sans-serif;font-size:20px;line-height:1;color:#c050b0;font-weight:400;font-style:normal;white-space:pre;letter-spacing:0.097px;transform:translateX(-50%);">worker</div><div id="t39" style="position:absolute;left:380.30px;top:624.06px;font-family:'Liberation Mono', monospace;font-size:24px;line-height:1;color:#ffffff;font-weight:400;font-style:normal;white-space:pre;letter-spacing:0.000px;">Pydantic User validate_python succeeded</div><div id="t40" style="position:absolute;left:1025.00px;top:623.00px;font-family:'Liberation Sans', sans-serif;font-size:20px;line-height:1;color:#8a8a8a;font-weight:400;font-style:normal;white-space:pre;letter-spacing:0.086px;transform:translateX(-50%);">logfire</div><div id="t41" style="position:absolute;left:1542.80px;top:622.55px;font-family:'Liberation Sans', sans-serif;font-size:21px;line-height:1;color:#ffffff;font-weight:400;font-style:normal;white-space:pre;letter-spacing:0.000px;">2ms</div><div id="t42" style="position:absolute;left:74.70px;top:668.06px;font-family:'Liberation Mono', monospace;font-size:24px;line-height:1;color:#8a8a8a;font-weight:400;font-style:normal;white-space:pre;letter-spacing:0.000px;">21:46:55</div><div id="t43" style="position:absolute;left:269.50px;top:667.50px;font-family:'Liberation Sans', sans-serif;font-size:20px;line-height:1;color:#c050b0;font-weight:400;font-style:normal;white-space:pre;letter-spacing:0.097px;transform:translateX(-50%);">worker</div><div id="t44" style="position:absolute;left:380.30px;top:668.06px;font-family:'Liberation Mono', monospace;font-size:24px;line-height:1;color:#ffffff;font-weight:400;font-style:normal;white-space:pre;letter-spacing:0.000px;">Pydantic User validate_python succeeded</div><div id="t45" style="position:absolute;left:1025.00px;top:667.00px;font-family:'Liberation Sans', sans-serif;font-size:20px;line-height:1;color:#8a8a8a;font-weight:400;font-style:normal;white-space:pre;letter-spacing:0.086px;transform:translateX(-50%);">logfire</div><div id="t46" style="position:absolute;left:1542.80px;top:666.55px;font-family:'Liberation Sans', sans-serif;font-size:21px;line-height:1;color:#ffffff;font-weight:400;font-style:normal;white-space:pre;letter-spacing:0.000px;">0.7ms</div><div id="t47" style="position:absolute;left:74.70px;top:712.06px;font-family:'Liberation Mono', monospace;font-size:24px;line-height:1;color:#8a8a8a;font-weight:400;font-style:normal;white-space:pre;letter-spacing:0.000px;">21:46:55</div><div id="t48" style="position:absolute;left:269.50px;top:711.50px;font-family:'Liberation Sans', sans-serif;font-size:20px;line-height:1;color:#c050b0;font-weight:400;font-style:normal;white-space:pre;letter-spacing:0.097px;transform:translateX(-50%);">worker</div><div id="t49" style="position:absolute;left:380.30px;top:712.06px;font-family:'Liberation Mono', monospace;font-size:24px;line-height:1;color:#ffffff;font-weight:400;font-style:normal;white-space:pre;letter-spacing:0.000px;">Pydantic User validate_python succeeded</div><div id="t50" style="position:absolute;left:1025.00px;top:711.00px;font-family:'Liberation Sans', sans-serif;font-size:20px;line-height:1;color:#8a8a8a;font-weight:400;font-style:normal;white-space:pre;letter-spacing:0.086px;transform:translateX(-50%);">logfire</div><div id="t51" style="position:absolute;left:1542.80px;top:710.55px;font-family:'Liberation Sans', sans-serif;font-size:21px;line-height:1;color:#ffffff;font-weight:400;font-style:normal;white-space:pre;letter-spacing:0.000px;">0.3ms</div><div id="t52" style="position:absolute;left:1773.00px;top:312.35px;font-family:'Liberation Sans', sans-serif;font-size:29px;line-height:1;color:#d2d2d2;font-weight:400;font-style:normal;white-space:pre;letter-spacing:-0.114px;"><b>Span:</b> Pydantic User validate_python</div><div id="t53" style="position:absolute;left:1773.00px;top:352.35px;font-family:'Liberation Sans', sans-serif;font-size:29px;line-height:1;color:#d2d2d2;font-weight:400;font-style:normal;white-space:pre;letter-spacing:0.027px;">succeeded</div><div id="t54" style="position:absolute;left:1718.80px;top:428.05px;font-family:'Liberation Sans', sans-serif;font-size:25px;line-height:1;color:#d8d8d8;font-weight:400;font-style:italic;white-space:pre;letter-spacing:-0.136px;">Service Name</div><div id="t55" style="position:absolute;left:1891.00px;top:428.05px;font-family:'Liberation Sans', sans-serif;font-size:25px;line-height:1;color:#d8d8d8;font-weight:400;font-style:normal;white-space:pre;letter-spacing:0.297px;">worker</div><div id="t56" style="position:absolute;left:1719.50px;top:480.05px;font-family:'Liberation Sans', sans-serif;font-size:25px;line-height:1;color:#d8d8d8;font-weight:400;font-style:italic;white-space:pre;letter-spacing:-0.357px;">Trace ID</div><div id="t57" style="position:absolute;left:1867.80px;top:480.05px;font-family:'Liberation Sans', sans-serif;font-size:25px;line-height:1;color:#d8d8d8;font-weight:400;font-style:normal;white-space:pre;letter-spacing:0.475px;">#2f00cac78c4f9a920cca8a1a4e0ba510</div><div id="t58" style="position:absolute;left:1718.80px;top:532.05px;font-family:'Liberation Sans', sans-serif;font-size:25px;line-height:1;color:#d8d8d8;font-weight:400;font-style:italic;white-space:pre;letter-spacing:-0.641px;">Span ID</div><div id="t59" style="position:absolute;left:1861.40px;top:532.05px;font-family:'Liberation Sans', sans-serif;font-size:25px;line-height:1;color:#d8d8d8;font-weight:400;font-style:normal;white-space:pre;letter-spacing:0.740px;">#a2227f6029f70732</div><div id="t60" style="position:absolute;left:2124.00px;top:532.05px;font-family:'Liberation Sans', sans-serif;font-size:25px;line-height:1;color:#d8d8d8;font-weight:400;font-style:italic;white-space:pre;letter-spacing:-0.438px;">Date</div><div id="t61" style="position:absolute;left:2193.50px;top:532.05px;font-family:'Liberation Sans', sans-serif;font-size:25px;line-height:1;color:#d8d8d8;font-weight:400;font-style:normal;white-space:pre;letter-spacing:1.068px;">2024-09-18</div><div id="t62" style="position:absolute;left:1719.50px;top:584.05px;font-family:'Liberation Sans', sans-serif;font-size:25px;line-height:1;color:#d8d8d8;font-weight:400;font-style:italic;white-space:pre;letter-spacing:-0.125px;">Time span</div><div id="t63" style="position:absolute;left:1851.10px;top:584.05px;font-family:'Liberation Sans', sans-serif;font-size:25px;line-height:1;color:#d8d8d8;font-weight:400;font-style:normal;white-space:pre;letter-spacing:-0.028px;">21:46:55.711 to 21:46:55.713</div><div id="t64" style="position:absolute;left:2202.50px;top:584.05px;font-family:'Liberation Sans', sans-serif;font-size:25px;line-height:1;color:#d8d8d8;font-weight:400;font-style:italic;white-space:pre;letter-spacing:0.429px;">Duration</div><div id="t65" style="position:absolute;left:2315.50px;top:584.05px;font-family:'Liberation Sans', sans-serif;font-size:25px;line-height:1;color:#d8d8d8;font-weight:400;font-style:normal;white-space:pre;letter-spacing:0.133px;">2ms</div><div id="t66" style="position:absolute;left:1725.30px;top:660.75px;font-family:'Liberation Sans', sans-serif;font-size:25px;line-height:1;color:#d4d4d4;font-weight:400;font-style:normal;white-space:pre;letter-spacing:0.013px;">Details</div><div id="t67" style="position:absolute;left:1835.30px;top:660.75px;font-family:'Liberation Sans', sans-serif;font-size:25px;line-height:1;color:#d4d4d4;font-weight:400;font-style:normal;white-space:pre;letter-spacing:-0.609px;">Raw Data</div><div id="t68" style="position:absolute;left:1713.00px;top:736.95px;font-family:'Liberation Sans', sans-serif;font-size:35px;line-height:1;color:#fff;font-weight:700;font-style:normal;white-space:pre;letter-spacing:0.583px;"><span style="color:#fff">Arguments:</span> <span style="color:#c8c8c8">(as JSON)</span></div><div id="t69" style="position:absolute;left:1734.50px;top:787.67px;font-family:'Liberation Mono', monospace;font-size:22.8px;line-height:1;color:#d4d4d4;font-weight:400;font-style:normal;white-space:pre;letter-spacing:0.000px;"><span style="color:#d4d4d4">{ </span><span style="color:#6e6e6e;font-style:italic">5 items</span></div><div id="t70" style="position:absolute;left:1756.00px;top:828.67px;font-family:'Liberation Mono', monospace;font-size:22.8px;line-height:1;color:#d4d4d4;font-weight:400;font-style:normal;white-space:pre;letter-spacing:0.000px;"><span style="color:#9cdcfe">"schema_name"</span><span style="color:#d4d4d4">: </span><span style="color:#ce9178">"User"</span><span style="color:#62b4f5">,</span></div><div id="t71" style="position:absolute;left:1756.00px;top:872.17px;font-family:'Liberation Mono', monospace;font-size:22.8px;line-height:1;color:#d4d4d4;font-weight:400;font-style:normal;white-space:pre;letter-spacing:0.000px;"><span style="color:#9cdcfe">"validation_method"</span><span style="color:#d4d4d4">: </span><span style="color:#ce9178">"validate_python"</span><span style="color:#62b4f5">,</span></div><div id="t72" style="position:absolute;left:1778.70px;top:908.67px;font-family:'Liberation Mono', monospace;font-size:22.8px;line-height:1;color:#d4d4d4;font-weight:400;font-style:normal;white-space:pre;letter-spacing:0.000px;"><span style="color:#9cdcfe">"input_data"</span><span style="color:#d4d4d4">: </span><span style="color:#d4d4d4">{ </span><span style="color:#6e6e6e;font-style:italic">3 items</span></div><div id="t73" style="position:absolute;left:1800.00px;top:950.17px;font-family:'Liberation Mono', monospace;font-size:22.8px;line-height:1;color:#d4d4d4;font-weight:400;font-style:normal;white-space:pre;letter-spacing:0.000px;"><span style="color:#9cdcfe">"name"</span><span style="color:#d4d4d4">: </span><span style="color:#ce9178">"Anne"</span><span style="color:#62b4f5">,</span></div><div id="t74" style="position:absolute;left:1800.00px;top:993.67px;font-family:'Liberation Mono', monospace;font-size:22.8px;line-height:1;color:#d4d4d4;font-weight:400;font-style:normal;white-space:pre;letter-spacing:0.000px;"><span style="color:#9cdcfe">"country_code"</span><span style="color:#d4d4d4">: </span><span style="color:#ce9178">"USA"</span><span style="color:#62b4f5">,</span></div><div id="t75" style="position:absolute;left:1800.00px;top:1036.37px;font-family:'Liberation Mono', monospace;font-size:22.8px;line-height:1;color:#d4d4d4;font-weight:400;font-style:normal;white-space:pre;letter-spacing:0.000px;"><span style="color:#9cdcfe">"dob"</span><span style="color:#d4d4d4">: </span><span style="color:#ce9178">"2000-01-01"</span><span style="color:#62b4f5">,</span></div><div id="t76" style="position:absolute;left:1765.00px;top:1071.67px;font-family:'Liberation Mono', monospace;font-size:22.8px;line-height:1;color:#d4d4d4;font-weight:400;font-style:normal;white-space:pre;letter-spacing:0.000px;"><span style="color:#d4d4d4">}</span></div><div id="t77" style="position:absolute;left:1756.00px;top:1112.17px;font-family:'Liberation Mono', monospace;font-size:22.8px;line-height:1;color:#d4d4d4;font-weight:400;font-style:normal;white-space:pre;letter-spacing:0.000px;"><span style="color:#9cdcfe">"success"</span><span style="color:#d4d4d4">: </span><span style="color:#569cd6">true</span><span style="color:#62b4f5">,</span></div><div id="t78" style="position:absolute;left:1778.70px;top:1148.67px;font-family:'Liberation Mono', monospace;font-size:22.8px;line-height:1;color:#d4d4d4;font-weight:400;font-style:normal;white-space:pre;letter-spacing:0.000px;"><span style="color:#9cdcfe">"result"</span><span style="color:#d4d4d4">: </span><span style="color:#d4d4d4">{ </span><span style="color:#6e6e6e;font-style:italic">3 items</span></div><div id="t79" style="position:absolute;left:1800.00px;top:1190.17px;font-family:'Liberation Mono', monospace;font-size:22.8px;line-height:1;color:#d4d4d4;font-weight:400;font-style:normal;white-space:pre;letter-spacing:0.000px;"><span style="color:#9cdcfe">"name"</span><span style="color:#d4d4d4">: </span><span style="color:#ce9178">"Anne"</span><span style="color:#62b4f5">,</span></div><div id="t80" style="position:absolute;left:1800.00px;top:1233.67px;font-family:'Liberation Mono', monospace;font-size:22.8px;line-height:1;color:#d4d4d4;font-weight:400;font-style:normal;white-space:pre;letter-spacing:0.000px;"><span style="color:#9cdcfe">"country_code"</span><span style="color:#d4d4d4">: </span><span style="color:#ce9178">"USA"</span><span style="color:#62b4f5">,</span></div><div id="t81" style="position:absolute;left:1800.00px;top:1276.37px;font-family:'Liberation Mono', monospace;font-size:22.8px;line-height:1;color:#d4d4d4;font-weight:400;font-style:normal;white-space:pre;letter-spacing:0.000px;"><span style="color:#9cdcfe">"dob"</span><span style="color:#d4d4d4">: </span><span style="color:#ce9178">"2000-01-01"</span><span style="color:#62b4f5">,</span></div><div id="t82" style="position:absolute;left:1765.00px;top:1311.67px;font-family:'Liberation Mono', monospace;font-size:22.8px;line-height:1;color:#d4d4d4;font-weight:400;font-style:normal;white-space:pre;letter-spacing:0.000px;"><span style="color:#d4d4d4">}</span></div><div id="t83" style="position:absolute;left:1721.00px;top:1343.67px;font-family:'Liberation Mono', monospace;font-size:22.8px;line-height:1;color:#d4d4d4;font-weight:400;font-style:normal;white-space:pre;letter-spacing:0.000px;"><span style="color:#d4d4d4">}</span></div></body></html>
